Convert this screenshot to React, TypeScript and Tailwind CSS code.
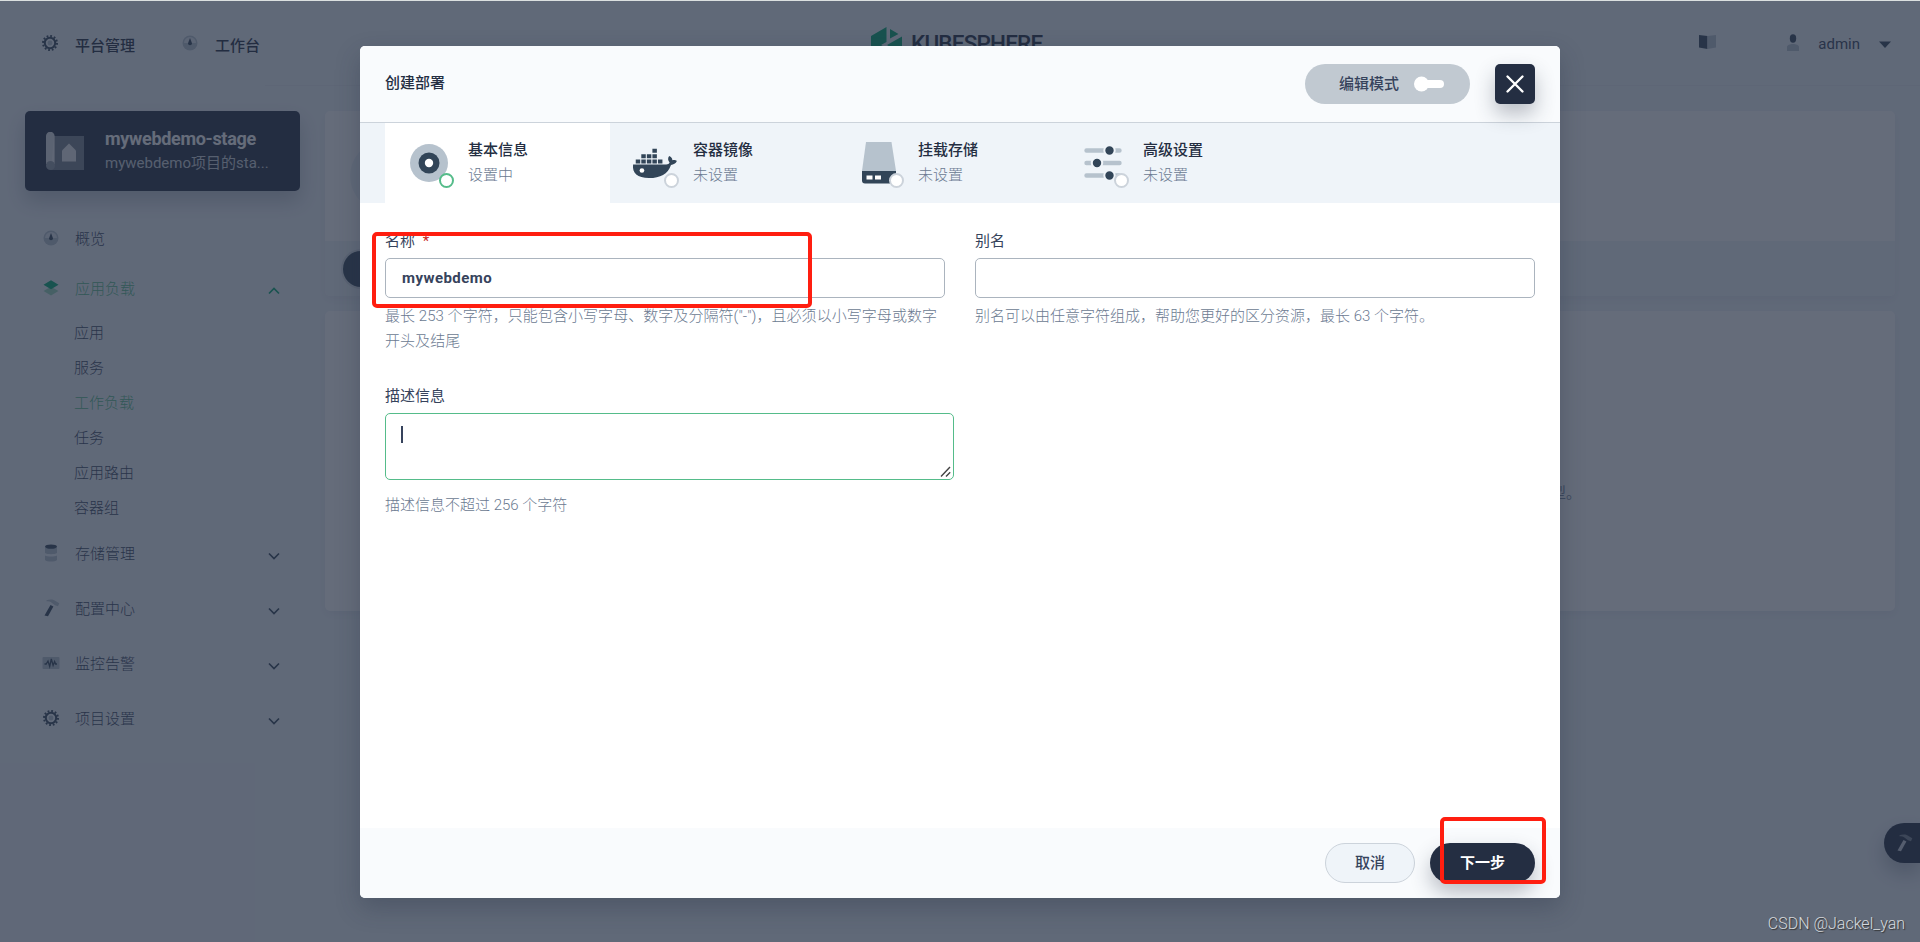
import React from "react";

const Gear = () => (
  <svg width="16" height="16" viewBox="0 0 16 16" className="block">
    <circle cx="8" cy="8" r="7" fill="none" stroke="#324558" strokeWidth="2" strokeDasharray="1.8 1.865" />
    <circle cx="8" cy="8" r="5.2" fill="#eff4f9" stroke="#324558" strokeWidth="2" />
    <circle cx="8" cy="8" r="2.4" fill="#b6c2cd" />
  </svg>
);

const Gauge = () => (
  <svg width="16" height="16" viewBox="0 0 16 16" className="block">
    <circle cx="8" cy="8" r="7.5" fill="#b6c2cd" />
    <path d="M2 8a6 6 0 0 1 12 0Z" fill="#dfe6ed" />
    <path d="M8 3l2 5.2a2 2 0 1 1-4 0Z" fill="#324558" />
  </svg>
);

const Layers = () => (
  <svg width="16" height="16" viewBox="0 0 16 16" className="block">
    <path d="M8 6.8l7.5 4.1L8 15.4.5 10.9z" fill="#97d8b9" />
    <path d="M8 .2l7.5 4.5L8 9.2.5 4.7z" fill="#00aa72" />
  </svg>
);

const Storage = () => (
  <svg width="16" height="18" viewBox="0 0 16 18" className="block">
    <path d="M2 11.500c2 1.300 10 1.300 12 0V16c-2 2-10 2-12 0z" fill="#b6c2cd" />
    <path d="M2 3h12v6c-2 1.600-10 1.600-12 0z" fill="#b6c2cd" />
    <ellipse cx="8" cy="2.600" rx="6" ry="2.200" fill="#324558" />
  </svg>
);

const Hammer = ({ head = "#b6c2cd", handle = "#324558" }: { head?: string; handle?: string }) => (
  <svg width="17" height="18" viewBox="0 0 17 18" className="block">
    <path d="M3.500 1.200C6.500 0 11 0 12.500 2l3.800 2.200-1.300 3-3-1-3-2.300C7.500 2.600 5.500 2.300 3.500 2.300z" fill={head} />
    <path d="M7.500 6l2.900 1.400L5 17.200l-3.500-.8z" fill={handle} />
  </svg>
);

const Monitor = () => (
  <svg width="18" height="14" viewBox="0 0 18 14" className="block">
    <rect x=".5" y="1" width="17" height="12" rx="1" fill="#b6c2cd" />
    <path d="M2.500 8h1.700L6 5l1.700 5.500L9.300 3l1.800 6.500 1.500-4 1 2.500H15" fill="none" stroke="#324558" strokeWidth="1.300" />
  </svg>
);

const Chevron = ({ up = false }: { up?: boolean }) => (
  <svg width="12" height="8" viewBox="0 0 12 8" className="mr-5 block">
    <path d={up ? "M1 6.500l5-5 5 5" : "M1 1.500l5 5 5-5"} fill="none" stroke={up ? "#00aa72" : "#324558"} strokeWidth="1.700" />
  </svg>
);

const NavRow = ({ icon, label, open, last }: { icon: React.ReactNode; label: string; open?: boolean; last?: boolean }) => (
  <div className={"flex h-[55px] items-center pl-[17px]" + (open ? " text-[#55bc8a]" : "")}>
    <span className="-mt-0.5 flex w-[18px] justify-center">{icon}</span>
    <span className="mt-0.5 ml-[15px] flex-1">{label}</span>
    {!last && <span className="mt-1"><Chevron up={open} /></span>}
  </div>
);

const Status = ({ active = false }: { active?: boolean }) => (
  <span className={"absolute -right-1.5 -bottom-1 h-[15px] w-[15px] rounded-full border-2 bg-white " + (active ? "border-[#55bc8a]" : "border-[#ccd3db]")} />
);

const Disc = () => (
  <svg width="38" height="40" viewBox="0 0 38 40" className="block">
    <circle cx="19" cy="20" r="19" fill="#b6c2cd" />
    <circle cx="19" cy="20" r="10.500" fill="#324558" />
    <circle cx="19" cy="20" r="4.200" fill="#fff" />
  </svg>
);

const Docker = () => (
  <svg width="47" height="32" viewBox="0 0 44 32" preserveAspectRatio="none" className="-ml-[3px] block shrink-0" fill="#324558">
    <path d="M1 17.500h31c1.700 0 2.800-.8 3.200-2-1.800-2.200-1.800-4.600-.4-6.500 2 .9 2.900 2.300 3 4.200 1.800-.3 3.400.1 4.200.9-1 2.500-3.200 3.800-5.500 3.800C33.500 27 26.500 31 16 31 5 31 0 26 1 17.500z" />
    <path d="M3.500 12.500h4.200v4H3.500zM8.700 12.500h4.200v4H8.700zM13.900 12.500h4.200v4h-4.200zM19.100 12.500h4.200v4h-4.200zM24.300 12.500h4.200v4h-4.200zM8.700 7.300h4.200v4H8.700zM13.900 7.300h4.200v4h-4.200zM19.100 7.300h4.200v4h-4.200zM19.100 1.800h4.200v4h-4.200z" />
    <circle cx="9.300" cy="23.500" r="2.200" fill="#fff" />
  </svg>
);

const Disk = () => (
  <svg width="38" height="42" viewBox="0 0 38 42" className="block shrink-0">
    <path d="M6 0h25.500L36 29H2z" fill="#b6c2cd" />
    <path d="M2 29h34v9.500a3 3 0 0 1-3 3H5a3 3 0 0 1-3-3z" fill="#324558" />
    <path d="M6.500 33.500h6v4h-6zM15 33.500h6v4h-6z" fill="#fff" />
  </svg>
);

const Sliders = () => (
  <svg width="40" height="36" viewBox="0 0 40 36" className="-ml-px block shrink-0">
    <path d="M2.500 5.500h33M2.500 18h33M2.500 30.500h33" stroke="#b6c2cd" strokeWidth="4.400" strokeLinecap="round" />
    <g fill="#324558" stroke="#eff4f9" strokeWidth="2">
      <circle cx="25.500" cy="5.500" r="5.200" />
      <circle cx="13" cy="18" r="5.200" />
      <circle cx="25.500" cy="30.500" r="5.200" />
    </g>
  </svg>
);

const Tab = ({ icon, title, active = false }: { icon: React.ReactNode; title: string; active?: boolean }) => (
  <div className={"flex h-20 w-[225px] items-center pl-[25px] " + (active ? "bg-white" : "")}>
    <div className="relative flex h-[42px] w-[38px] items-center">
      {icon}
      <Status active={active} />
    </div>
    <div className="ml-[20px] leading-[25px]">
      <div className="font-medium text-[#242e42]">{title}</div>
      <div className="font-light text-[#6b7a91]">{active ? "设置中" : "未设置"}</div>
    </div>
  </div>
);

const Background = () => (
  <div className="h-full bg-[#eff4f9] text-[#36435c]">
    <header className="flex h-[84px] items-center">
      <div className="flex w-[871px] shrink-0 items-center pl-[42px] font-medium text-[#242e42]">
        <Gear />
        <span className="mt-1.5 ml-[17px]">平台管理</span>
        <span className="ml-[47px]"><Gauge /></span>
        <span className="mt-1.5 ml-[17px]">工作台</span>
      </div>
      <div className="flex w-[178px] items-center pt-[3px]">
        <svg width="32" height="36" viewBox="0 0 32 36" className="block shrink-0">
          <path d="M0 9L15.500 0v15L10 18l5.500 3v15L0 27zM19 2l8.500 5L19 11.500zM16 18l15-8.500v18z" fill="#00a971" />
        </svg>
        <span className="-mt-1 ml-2 whitespace-nowrap font-[Roboto] text-[22.5px] leading-6 font-medium tracking-[-0.8px] text-[#242e42]">KUBESPHERE</span>
      </div>
      <div className="flex flex-1 items-center justify-end pr-[29px]">
        <svg width="17" height="14" viewBox="0 0 17 14" className="-mt-0.5 block">
          <path d="M0 0l8.500 1v13L0 12.500z" fill="#324558" />
          <path d="M8.500 1L17 0v12.500L8.500 14z" fill="#b6c2cd" />
        </svg>
        <svg width="14" height="18" viewBox="0 0 14 18" className="ml-[70px] block">
          <ellipse cx="7" cy="4.500" rx="3.200" ry="4.200" fill="#324558" />
          <path d="M1 13c0-4 12-4 12 0v4H1z" fill="#b6c2cd" />
        </svg>
        <span className="mt-0.5 ml-[18px]">admin</span>
        <svg width="12" height="8" viewBox="0 0 12 8" className="mt-1 ml-[19px] block">
          <path d="M0 .5h12L6 7z" fill="#324558" />
        </svg>
      </div>
    </header>
    <div className="ml-[265px] h-px bg-[#e6ecf2]" />
    <div className="flex gap-[25px] px-[25px] pt-[25px]">
      <aside className="w-[275px] shrink-0">
        <div className="flex h-20 items-center rounded-[5px] bg-[#242e42] pl-[21px] shadow-[0_10px_20px_rgba(36,46,66,0.25)]">
          <svg width="38" height="38" viewBox="0 0 38 38" className="block">
            <path d="M8 4h30v34H5z" fill="#77808d" />
            <path d="M0 4a4.300 4.300 0 0 1 8.600 0v28H0z" fill="#fff" opacity=".85" />
            <circle cx="4.500" cy="33.500" r="4.500" fill="#929aa6" />
            <path d="M16 18.500l7-7 7 7v11H16z" fill="#fff" opacity=".85" />
          </svg>
          <div className="ml-[21px]">
            <div className="text-[18px] leading-[25px] font-bold tracking-[-0.3px] text-white">mywebdemo-stage</div>
            <div className="text-[15px] leading-[25px] text-[#ccd3db]">mywebdemo项目的sta...</div>
          </div>
        </div>
        <nav className="pt-5 font-light">
          <NavRow icon={<Gauge />} label="概览" last />
          <div className="-mt-[5px]"><NavRow icon={<Layers />} label="应用负载" open /></div>
          <ul className="pl-[49px] leading-[35px]">
            <li>应用</li>
            <li>服务</li>
            <li className="text-[#55bc8a]">工作负载</li>
            <li>任务</li>
            <li>应用路由</li>
            <li>容器组</li>
          </ul>
          <div>
            <NavRow icon={<Storage />} label="存储管理" />
            <NavRow icon={<Hammer />} label="配置中心" />
            <NavRow icon={<Monitor />} label="监控告警" />
            <NavRow icon={<Gear />} label="项目设置" />
          </div>
        </nav>
      </aside>
      <main className="w-[1570px] shrink-0">
        <section className="h-[185px] overflow-hidden rounded-[5px] bg-white shadow-[0_4px_8px_rgba(36,46,66,0.06)]">
          <div className="h-[130px] pt-[30px] pl-[25px]">
            <div className="h-[70px] w-[70px] rounded-full bg-[#eff4f9]" />
          </div>
          <div className="flex h-[55px] items-center bg-[#eff4f9] pl-[18px]">
            <div className="h-[36px] w-[120px] rounded-full bg-[#324558] ring-2 ring-[#d8dee5]" />
          </div>
        </section>
        <section className="mt-[15px] flex h-[300px] items-center justify-end rounded-[5px] bg-white pt-[64px] pr-[314px] text-[#79879c] shadow-[0_4px_8px_rgba(36,46,66,0.06)]">
          工作负载类型。
        </section>
      </main>
    </div>
  </div>
);

const inputStyle = "flex h-10 w-[560px] items-center rounded-[5px] border border-[#abb4be] bg-white px-4 font-bold tracking-[0.45px] text-[#36435c]";

const Modal = () => (
  <div className="flex h-[852px] w-[1200px] flex-col overflow-hidden rounded-[5px] bg-white shadow-[0_10px_25px_rgba(36,46,66,0.3)]">
    <div className="flex h-[77px] shrink-0 items-center border-b border-[#ccd3db] bg-[#f9fbfd] pr-[25px] pl-[25px]">
      <div className="mt-[-2px] flex-1 font-medium text-[#242e42]">创建部署</div>
      <div className="flex h-10 w-[165px] items-center rounded-full bg-[#c1c9d1] pl-[34px] font-medium text-[#36435c]">
        编辑模式
        <svg width="32" height="16" viewBox="0 0 32 16" className="ml-[14px] block" fill="#fff">
          <rect x="8" y="4" width="23" height="8" rx="4" />
          <circle cx="8.500" cy="8" r="7.500" />
        </svg>
      </div>
      <div className="relative ml-[25px] flex h-10 w-10 items-center justify-center rounded-[5px] bg-[#242e42] shadow-[0_10px_20px_rgba(36,46,66,0.3)]">
        <svg width="20" height="20" viewBox="0 0 20 20" className="block">
          <path d="M2.500 2.500l15 15M17.500 2.500l-15 15" stroke="#fff" strokeWidth="2.400" strokeLinecap="round" />
        </svg>
      </div>
    </div>
    <div className="flex h-20 shrink-0 bg-[#eff4f9] pl-[25px]">
      <Tab icon={<Disc />} title="基本信息" active />
      <Tab icon={<Docker />} title="容器镜像" />
      <Tab icon={<Disk />} title="挂载存储" />
      <Tab icon={<Sliders />} title="高级设置" />
    </div>
    <div className="flex-1 px-[25px] pt-[26px] leading-[25px]">
      <div className="flex gap-[30px]">
        <div className="w-[560px]">
          <div className="mb-1 text-[#36435c]">名称 <span className="ml-1 text-[#ca2621]">*</span></div>
          <div className={inputStyle}>mywebdemo</div>
          <div className="mt-[6px] font-light tracking-[0.05px] text-[#6b7a91]">最长 253 个字符，只能包含小写字母、数字及分隔符("-")，且必须以小写字母或数字开头及结尾</div>
        </div>
        <div className="w-[560px]">
          <div className="mb-1 text-[#36435c]">别名</div>
          <div className={inputStyle} />
          <div className="mt-[6px] font-light text-[#6b7a91]">别名可以由任意字符组成，帮助您更好的区分资源，最长 63 个字符。</div>
        </div>
      </div>
      <div className="mt-[30px] text-[#36435c]">描述信息</div>
      <div className="mt-1 flex h-[67px] w-[569px] justify-between rounded-[5px] border border-[#55bc8a] pl-[15px]">
        <span className="mt-3 h-[17px] w-0.5 bg-[#36435c]" />
        <svg width="11" height="11" viewBox="0 0 11 11" className="mr-[2px] mb-[2px] block self-end">
          <path d="M1 10.500L10 1M6 10.500L10.200 6.200" stroke="#444" strokeWidth="1.400" />
        </svg>
      </div>
      <div className="mt-[13px] font-light text-[#6b7a91]">描述信息不超过 256 个字符</div>
    </div>
    <div className="flex h-[70px] shrink-0 items-center justify-end gap-[15px] bg-[#f9fbfd] pr-[25px] font-medium">
      <div className="flex h-10 w-[90px] items-center justify-center rounded-full border border-[#ccd3db] bg-[#eff4f9] text-[#36435c]">取消</div>
      <div className="flex h-10 w-[105px] items-center justify-center rounded-full bg-[#242e42] font-bold text-white shadow-[0_10px_20px_rgba(36,46,66,0.3)]">下一步</div>
    </div>
  </div>
);

export default function App() {
  return (
    <div className="relative h-[942px] w-[1920px] overflow-hidden border-t border-[#dbe0e0] font-[Roboto,'Noto_Sans_CJK_SC',sans-serif] text-[15px] leading-[25px]">
      <Background />
      <div className="absolute top-[822px] right-0 flex h-10 w-9 items-center rounded-l-full bg-[#242e42] pl-3 shadow-[0_10px_20px_rgba(36,46,66,0.3)]">
        <Hammer head="#77808d" handle="#c9ced6" />
      </div>
      <div className="absolute inset-0 flex items-start justify-center bg-[rgba(35,45,65,0.7)] pt-[45px]">
        <Modal />
      </div>
      <div className="absolute top-[231px] left-[372px] h-[76px] w-[440px] rounded-[5px] border-4 border-[#ff1e10]" />
      <div className="absolute top-[816px] left-[1440px] h-[67px] w-[106px] rounded-[5px] border-4 border-[#ff1e10]" />
      <div className="absolute right-[15px] bottom-[6px] font-[Roboto] text-[16px] leading-6 font-light text-[#d4d8dc] [text-shadow:1px_1px_1px_#333]">CSDN @Jackel_yan</div>
    </div>
  );
}
